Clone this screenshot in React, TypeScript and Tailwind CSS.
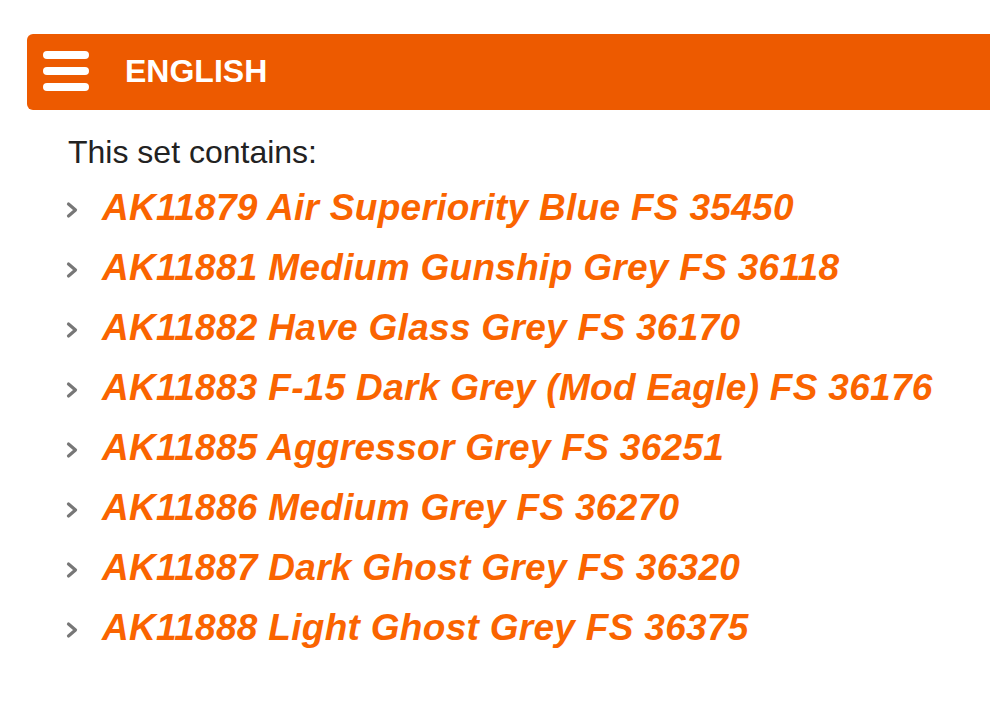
import React from 'react';

const items = [
  'AK11879 Air Superiority Blue FS 35450',
  'AK11881 Medium Gunship Grey FS 36118',
  'AK11882 Have Glass Grey FS 36170',
  'AK11883 F-15 Dark Grey (Mod Eagle) FS 36176',
  'AK11885 Aggressor Grey FS 36251',
  'AK11886 Medium Grey FS 36270',
  'AK11887 Dark Ghost Grey FS 36320',
  'AK11888 Light Ghost Grey FS 36375',
];

function Chevron() {
  return (
    <svg width="16" height="18" viewBox="0 0 16 18" className="shrink-0">
      <path d="M4.5 3 L11.5 9 L4.5 15" fill="none" stroke="#777" strokeWidth="3.2" strokeLinecap="round" strokeLinejoin="round" />
    </svg>
  );
}

export default function App() {
  return (
    <div className="min-h-screen bg-white pt-[34px] pl-[27px] font-['Liberation_Sans',Arial,sans-serif] overflow-hidden">
      <div className="h-[76px] bg-[#ed5a00] rounded-l-[6px] flex items-center pl-[16px]">
        <div className="flex flex-col gap-[8px] w-[46px] -mt-[3px]">
          <span className="h-[8px] rounded-full bg-white blur-[0.6px]" />
          <span className="h-[8px] rounded-full bg-white blur-[0.6px]" />
          <span className="h-[8px] rounded-full bg-white blur-[0.6px]" />
        </div>
        <span className="ml-[36px] -mt-[3px] text-white font-bold text-[32px] leading-none">ENGLISH</span>
      </div>

      <div className="pl-[41px] pt-[22px]">
        <p className="text-[32px] leading-[40px] text-[#222]">This set contains:</p>
        <ul className="mt-[6px]">
          {items.map((t) => (
            <li key={t} className="flex items-center h-[60px]">
              <span className="w-[38px] flex items-center pt-[4px] -ml-[4px]">
                <Chevron />
              </span>
              <span className="text-[37px] tracking-[0.3px] leading-[60px] font-bold italic text-[#fa6400] whitespace-nowrap">{t}</span>
            </li>
          ))}
        </ul>
      </div>
    </div>
  );
}
